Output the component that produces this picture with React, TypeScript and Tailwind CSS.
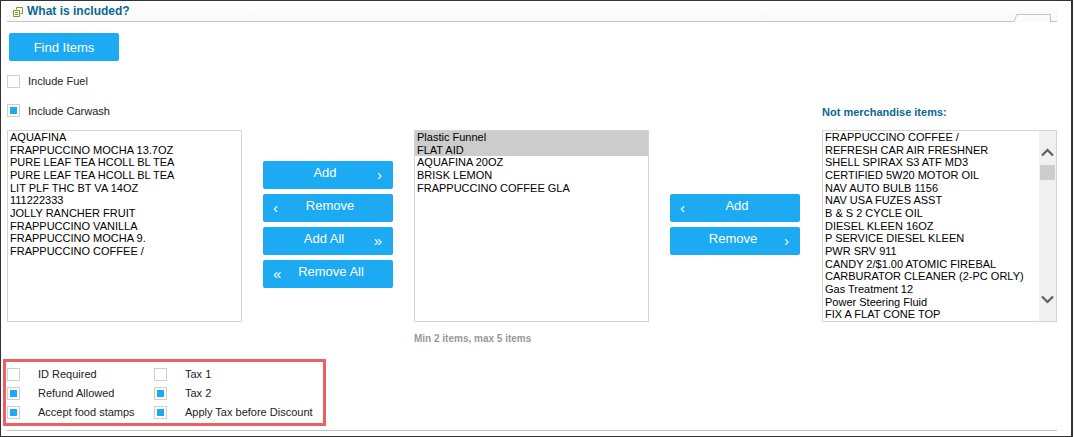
const leftItems = [
  'AQUAFINA',
  'FRAPPUCCINO MOCHA 13.7OZ',
  'PURE LEAF TEA HCOLL BL TEA',
  'PURE LEAF TEA HCOLL BL TEA',
  'LIT PLF THC BT VA 14OZ',
  '111222333',
  'JOLLY RANCHER FRUIT',
  'FRAPPUCCINO VANILLA',
  'FRAPPUCCINO MOCHA 9.',
  'FRAPPUCCINO COFFEE /',
];

const middleItems = ['Plastic Funnel', 'FLAT AID', 'AQUAFINA 20OZ', 'BRISK LEMON', 'FRAPPUCCINO COFFEE GLA'];

const rightItems = [
  'FRAPPUCCINO COFFEE /',
  'REFRESH CAR AIR FRESHNER',
  'SHELL SPIRAX S3 ATF MD3',
  'CERTIFIED 5W20 MOTOR OIL',
  'NAV AUTO BULB 1156',
  'NAV USA FUZES ASST',
  'B & S 2 CYCLE OIL',
  'DIESEL KLEEN 16OZ',
  'P SERVICE DIESEL KLEEN',
  'PWR SRV 911',
  'CANDY 2/$1.00 ATOMIC FIREBAL',
  'CARBURATOR CLEANER (2-PC ORLY)',
  'Gas Treatment 12',
  'Power Steering Fluid',
  'FIX A FLAT CONE TOP',
];

function Check({ checked }: { checked?: boolean }) {
  return (
    <span className="flex h-[13px] w-[13px] shrink-0 items-center justify-center border border-[#cfcfcf] bg-white">
      {checked && <span className="h-[7px] w-[7px] bg-[#1caaf2]" />}
    </span>
  );
}

function MoveButton({ label, arrow, side, shift }: { label: string; arrow: string; side: 'left' | 'right'; shift: string }) {
  return (
    <button className="relative h-7 w-[130px] rounded-[2px] bg-[#1caaf2] pb-[4px] text-[13px] text-white">
      <span className={`relative ${shift}`}>{label}</span>
      <span
        className={
          side === 'left'
            ? 'absolute bottom-[4px] left-[10px] text-[15px] leading-[20px]'
            : 'absolute bottom-[4px] right-[11px] text-[15px] leading-[20px]'
        }
      >
        {arrow}
      </span>
    </button>
  );
}

function ListBox({ items, selected = 0 }: { items: string[]; selected?: number }) {
  return (
    <div className="h-[192px] w-[235px] border border-[#d4d4d4] bg-white text-[11px] leading-[12.65px] text-black">
      {items.map((item, i) => (
        <div key={i} className={i < selected ? 'bg-[#cccccc] pl-[2px]' : 'pl-[2px]'}>
          {item}
        </div>
      ))}
    </div>
  );
}

export default function App() {
  return (
    <div className="h-[437px] w-[1073px] border border-r-2 border-[#333333] bg-white pl-[6px] font-['Liberation_Sans',Arial,sans-serif] text-[11px] text-[#222222]">
      <div className="flex h-[21px] w-[1050px] items-center border-b border-[#c4c4c4] bg-gradient-to-b from-white to-[#f8f8f8] pl-[6px]">
        <svg width="10" height="10" viewBox="0 0 10 10" fill="none" stroke="#6f9f1c" strokeWidth="1" className="mt-[2px]">
          <path d="M3.5 2.5V.5h6v6h-2M.5 3.5h6v6h-6zM2 5.5h3M2 7.5h3" />
        </svg>
        <span className="ml-[4px] text-[12px] font-bold text-[#0c6794]">What is included?</span>
        <svg width="38" height="8" viewBox="0 0 38 8" fill="#fbfbfb" stroke="none" className="mb-[-1px] ml-auto mr-[5px] self-end">
          <path d="M0 8L2.7 .5H36.5V8z" />
          <path d="M0 8L2.7 .5H36.5V8" fill="none" stroke="#c4c4c4" />
        </svg>
      </div>

      <button className="ml-[2px] mt-[11px] block h-7 w-[110px] rounded-[2px] bg-[#1caaf2] pt-px text-[13px] text-white">
        Find Items
      </button>

      <label className="mt-[12px] flex items-center gap-2">
        <Check />
        <span>Include Fuel</span>
      </label>

      <div className="mt-[12px] flex w-[1050px] items-center justify-between">
        <label className="flex items-center gap-2">
          <Check checked />
          <span>Include Carwash</span>
        </label>
        <span className="mt-[2px] w-[235px] font-bold text-[#0c6794]">Not merchandise items:</span>
      </div>

      <div className="mt-[10px] flex items-start">
        <ListBox items={leftItems} />

        <div className="ml-[21px] flex w-[130px] flex-col gap-[5px] pt-[31px]">
          <MoveButton label="Add" arrow="›" side="right" shift="left-[-3px]" />
          <MoveButton label="Remove" arrow="‹" side="left" shift="left-[2px]" />
          <MoveButton label="Add All" arrow="»" side="right" shift="left-[-4px]" />
          <MoveButton label="Remove All" arrow="«" side="left" shift="left-[3px]" />
        </div>

        <div className="ml-[21px] w-[235px]">
          <ListBox items={middleItems} selected={2} />
          <p className="mt-[9px] text-[10px] font-bold text-[#999999]">Min 2 items, max 5 items</p>
        </div>

        <div className="ml-[21px] flex w-[130px] flex-col gap-[5px] pt-[64px]">
          <MoveButton label="Add" arrow="‹" side="left" shift="left-[2px]" />
          <MoveButton label="Remove" arrow="›" side="right" shift="left-[-2px]" />
        </div>

        <div className="relative ml-[22px]">
          <ListBox items={rightItems} />
          <div className="absolute bottom-px right-px top-px flex w-[17px] flex-col items-center bg-[#f0f0f0]">
            <svg width="13" height="9" viewBox="0 0 13 9" fill="none" stroke="#5f5f5f" strokeWidth="2.2" className="mt-[17px]">
              <path d="M1 7.5l5.5-5.5L12 7.5" />
            </svg>
            <span className="mt-[8px] h-[15px] w-[15px] bg-[#cdcdcd]" />
            <svg width="13" height="9" viewBox="0 0 13 9" fill="none" stroke="#5f5f5f" strokeWidth="2.2" className="mt-[115px]">
              <path d="M1 1.5L6.5 7 12 1.5" />
            </svg>
          </div>
        </div>
      </div>

      <div className="ml-[-4px] mt-[13px] grid h-[67px] w-[323px] grid-cols-[147px_1fr] content-center gap-y-[6px] border-[3px] border-[#ee5f62] pl-px pt-[2px] leading-[13px]">
        {[
          ['ID Required', false, 'Tax 1', false],
          ['Refund Allowed', true, 'Tax 2', true],
          ['Accept food stamps', true, 'Apply Tax before Discount', true],
        ].map(([a, aChecked, b, bChecked]) => (
          <div key={a as string} className="contents">
            <label className="flex items-center gap-[18px]">
              <Check checked={aChecked as boolean} />
              <span>{a}</span>
            </label>
            <label className="flex items-center gap-[18px]">
              <Check checked={bChecked as boolean} />
              <span>{b}</span>
            </label>
          </div>
        ))}
      </div>

      <div className="mt-[4px] w-[1050px] border-t border-[#c4c4c4]" />
    </div>
  );
}
